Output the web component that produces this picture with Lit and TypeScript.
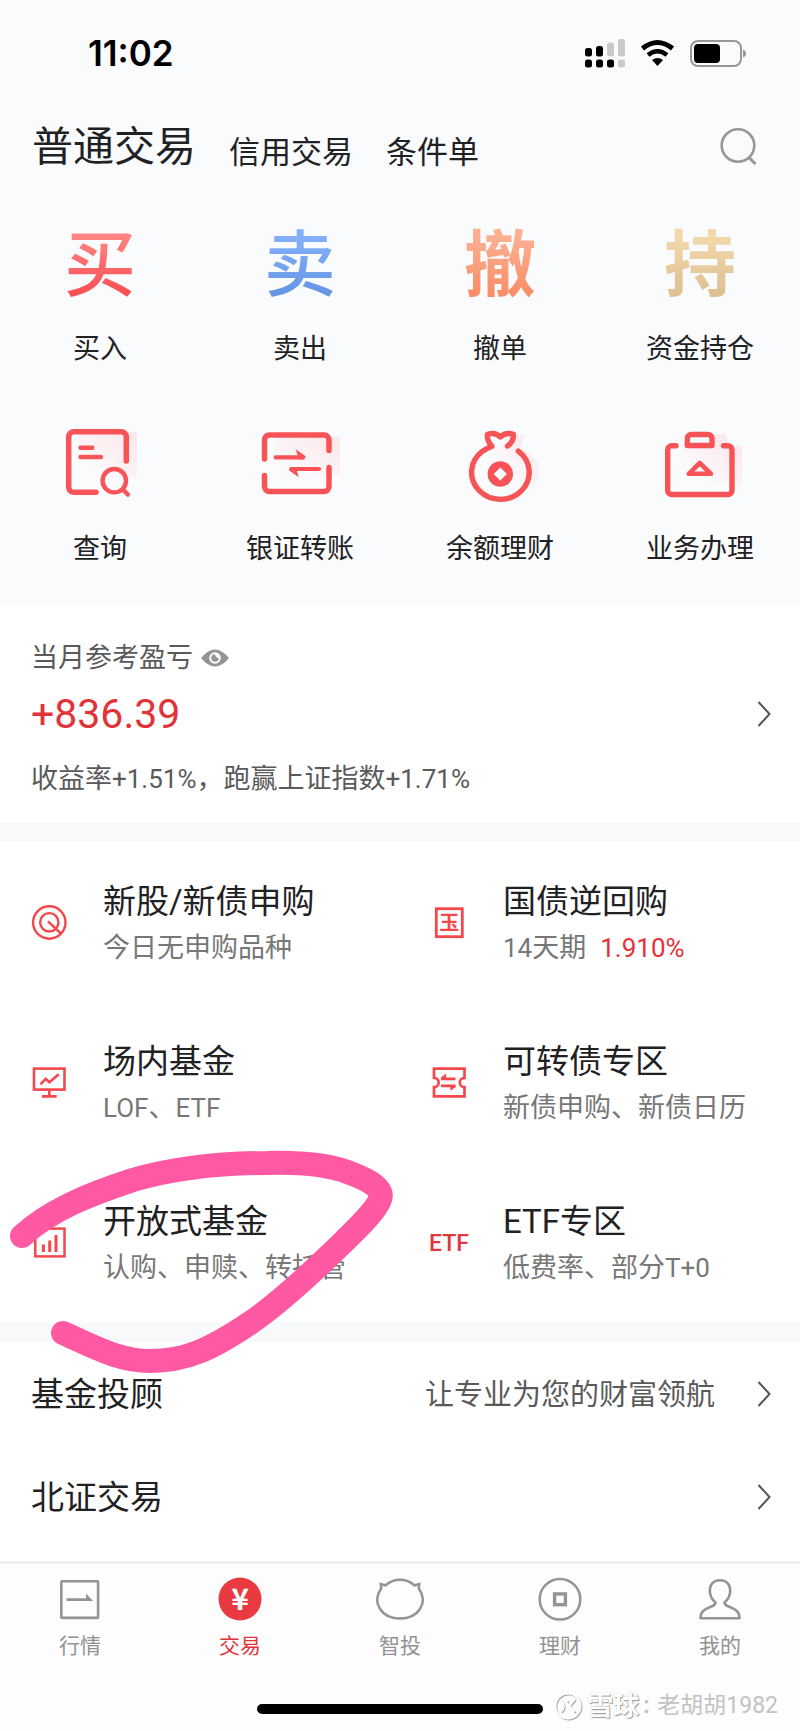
import { LitElement, html, css, svg, nothing } from "lit";
import type { TemplateResult } from "lit";
import { customElement, property, state } from "lit/decorators.js";
import { classMap } from "lit/directives/class-map.js";

type Art = ReturnType<typeof svg>;

const ART: Record<string, { box: string; body: Art }> = {
  query: {
    box: "0 0 80 80",
    body: svg`
      <defs><linearGradient id="q" x1="0" y1="1" x2="1" y2="0"><stop offset="0.2" stop-color="#fde3e6" stop-opacity="0"/><stop offset="1" stop-color="#fde6e9"/></linearGradient></defs>
      <rect x="18" y="7" width="59" height="46" rx="2" fill="url(#q)"/>
      <g fill="none" stroke="#f85457" stroke-linecap="round" stroke-width="5.5">
        <path d="M66.3 36V11.7a5 5 0 0 0-5-5H13.7a5 5 0 0 0-5 5v50.6a5 5 0 0 0 5 5H36"/>
        <path d="M20.5 22.7H32.3M20.5 32H41" stroke-width="4.4"/>
        <circle cx="54.3" cy="55.7" r="11.7" stroke-width="4.4"/>
        <path d="M63.6 65.2l4.2 4.4" stroke-width="4.4"/>
      </g>`,
  },
  transfer: {
    box: "0 0 80 80",
    body: svg`
      <defs><linearGradient id="t" x1="0" y1="1" x2="1" y2="0"><stop offset="0.2" stop-color="#fde3e6" stop-opacity="0"/><stop offset="1" stop-color="#fde6e9"/></linearGradient></defs>
      <rect x="15" y="12" width="65" height="38" rx="2" fill="url(#t)"/>
      <g fill="none" stroke="#f85457" stroke-linecap="round" stroke-width="5.5">
        <path d="M4.5 34V15a5 5 0 0 1 5-5H64a5 5 0 0 1 5 5v10.5"/>
        <path d="M4.5 50.5v11a5 5 0 0 0 5 5H64a5 5 0 0 0 5-5V42.5"/>
        <path d="M15.7 32.4H43M59 44H31.5" stroke-width="4.2"/>
      </g>
      <path d="M35.7 24.2L45.4 31q.6 2-1.5 3.4H39z" fill="#f85457"/>
      <path d="M38.7 52.2L29.2 45.4q-.6-2 1.5-3.4H36z" fill="#f85457"/>`,
  },
  bag: {
    box: "0 0 80 80",
    body: svg`
      <defs><linearGradient id="b" x1="0" y1="1" x2="1" y2="0"><stop offset="0.4" stop-color="#fde3e6" stop-opacity="0"/><stop offset="1" stop-color="#fde3e6"/></linearGradient></defs>
      <path d="M50 10h14l-4 14c14 4 22 16 18 32-8 20-38 20-52 8l-4-30z" fill="url(#b)"/>
      <g fill="none" stroke="#f85457" stroke-linecap="round" stroke-linejoin="round" stroke-width="5.4">
        <path d="M58.3 26.2A28.8 27 0 1 1 22.5 26.2Q27.5 23 32 21.3C28.5 17.5 26.8 13 27.5 9.3C33 7.5 37.500 8.800 40.300 12C43.500 8.800 48 7.500 53.500 9.300C53.500 14 51.500 18.500 47.500 21"/>
      </g>
      <path d="M31 12q5 .5 7.500 5h4q3-4.500 8-5l-9.500 10h-2z" fill="#fff" opacity=".6"/>
      <path fill-rule="evenodd" fill="#f85457" d="M40.300 36.300a12.700 12.700 0 1 1 0 25.400a12.700 12.700 0 1 1 0-25.400zM40.300 42.400L33.700 49l6.600 6.600L46.900 49z"/>`,
  },
  briefcase: {
    box: "0 0 80 80",
    body: svg`
      <defs><linearGradient id="c" x1="0" y1="1" x2="1" y2="0"><stop offset="0.2" stop-color="#fde3e6" stop-opacity="0"/><stop offset="1" stop-color="#fde3e6"/></linearGradient></defs>
      <path d="M22 22h28V9h16l2 12h14v38H22z" fill="url(#c)"/>
      <g fill="none" stroke="#f85457" stroke-linecap="round" stroke-linejoin="round" stroke-width="5.4">
        <path d="M16 20.800H11.700a4 4 0 0 0-4 4V65.500a4 4 0 0 0 4 4H68a4 4 0 0 0 4-4V24.800a4 4 0 0 0-4-4H63.500"/>
        <path d="M27.300 20.500V13.500a4 4 0 0 1 4-4H48a4 4 0 0 1 4 4v7z"/>
        <path d="M39.700 38L28.800 48.800H51z" stroke-width="4.600"/>
      </g>`,
  },
  subscribe: {
    box: "0 0 36 36",
    body: svg`<g fill="none" stroke="#f5484c" stroke-width="2.400">
      <circle cx="18.300" cy="18.500" r="16.200"/><circle cx="18.300" cy="18.300" r="9.200"/>
      <path d="M17 17.400L30 29.600" stroke-width="2.600"/></g>`,
  },
  bond: {
    box: "0 0 36 36",
    body: svg`<rect x="5.300" y="4.700" width="26" height="28" fill="none" stroke="#f5484c" stroke-width="2.800"/>
      <text class="glyph" x="18.300" y="26" font-size="20" text-anchor="middle" fill="#f5484c">玉</text>`,
  },
  monitor: {
    box: "0 0 36 36",
    body: svg`<g fill="none" stroke="#f5484c" stroke-width="2.600">
      <rect x="3" y="4.600" width="30.500" height="21"/>
      <path d="M18.300 26v6M11 32.400H25.700M9.500 20.300L14.700 14.800L18.400 18.200L27.700 10.300"/></g>`,
  },
  ticket: {
    box: "0 0 36 36",
    body: svg`<g fill="none" stroke="#f5484c" stroke-width="2.700">
      <path d="M3 4.600H33.500V13.800A4.700 4.700 0 0 0 33.500 23.200V32.400H3V23.200A4.700 4.700 0 0 0 3 13.800z"/>
      <path d="M10 14.800H24.500M10 21.800H24.500" stroke-width="2.800"/></g>
      <path d="M15.200 9.500L15.200 14H9.200zM19.400 26.800V22.500H25.600z" fill="#f5484c"/>`,
  },
  bars: {
    box: "0 0 36 36",
    body: svg`<g fill="none" stroke="#f5484c" stroke-width="2.500">
      <rect x="4.300" y="4.600" width="29.200" height="27.800"/>
      <path d="M12.400 20.500V28M18.700 16.500V28M25 11V28" stroke-width="3"/></g>`,
  },
  etf: {
    box: "0 0 36 36",
    body: svg`<text class="latin" x="18" y="27" font-size="23" text-anchor="middle" fill="#e0373c">ETF</text>`,
  },
  market: {
    box: "0 0 48 44",
    body: svg`<rect x="5.300" y="4.300" width="36.800" height="36.600" rx="1" fill="none" stroke="#949494" stroke-width="2.600"/>
      <path d="M10.500 21.300H30V16.600L37 24H10.500z" fill="#949494"/>`,
  },
  trade: {
    box: "0 0 48 44",
    body: svg`<circle cx="24" cy="22" r="21.500" fill="#e83a40"/>
      <text class="glyph" x="24" y="33" font-size="30" text-anchor="middle" fill="#fff">¥</text>`,
  },
  smart: {
    box: "0 0 48 44",
    body: svg`<path d="M5.200 11.500L4.800 7.200L9.600 8.300C18 1 30 1 38.400 8.300L43.200 7.200L42.800 11.500C53 26 42 41.600 24 41.600S-5 26 5.200 11.500z" fill="none" stroke="#949494" stroke-width="2.500"/>`,
  },
  wealth: {
    box: "0 0 48 44",
    body: svg`<g fill="none" stroke="#949494"><circle cx="24" cy="22.300" r="20.300" stroke-width="2.500"/>
      <rect x="18.600" y="16.900" width="10.800" height="10.800" stroke-width="3.400"/></g>`,
  },
  mine: {
    box: "0 0 48 44",
    body: svg`<path d="M19.500 25.500C15.500 22 13.800 18.500 13.800 14C13.800 7 18 3.200 24 3.200S34.200 7 34.200 14C34.200 18.500 32.500 22 28.500 25.500C28.500 28 31 29 35 30.500C41 33 43.500 35.500 43.500 41.300H4.500C4.500 35.500 7 33 13 30.500C17 29 19.500 28 19.500 25.500Z" fill="none" stroke="#949494" stroke-width="2.600" stroke-linejoin="round"/>`,
  },
  chevron: {
    box: "0 0 14 28",
    body: svg`<path d="M1.500 2L12.500 14L1.500 26" fill="none" stroke="#555" stroke-width="2"/>`,
  },
  search: {
    box: "0 0 40 40",
    body: svg`<g fill="none" stroke="#959799" stroke-width="2.600"><circle cx="19" cy="18.500" r="16.300"/><path d="M30.500 31L36.500 37" stroke-width="3"/></g>`,
  },
  eye: {
    box: "0 0 28 18",
    body: svg`<path d="M0 9Q7 .5 14 .5T28 9Q21 17.500 14 17.500T0 9z" fill="#949494"/>
      <circle cx="14" cy="9" r="5.800" fill="#fff"/><path d="M14 5.300A3.700 3.700 0 1 0 17.700 9Q14.500 9 14 5.300z" fill="#949494"/>`,
  },
};

@customElement("line-icon")
export class LineIcon extends LitElement {
  @property() name = "";

  static styles = css`
    :host { display: block; flex: none; }
    .art { display: block; width: 100%; height: 100%; overflow: visible; }
    .glyph { font-family: "Noto Sans CJK SC", sans-serif; font-weight: 700; }
    .latin { font-family: Roboto, sans-serif; font-weight: 500; }
  `;

  render() {
    const art = ART[this.name];
    return art
      ? html`<svg class="art" viewBox=${art.box} aria-hidden="true">${art.body}</svg>`
      : nothing;
  }
}

interface Shortcut { label: string; icon?: string; mark?: string; tone?: string; }
interface Service { icon: string; title: TemplateResult | string; note: TemplateResult | string; circled?: boolean; }

const SHORTCUTS: Shortcut[] = [
  { mark: "买", tone: "buy", label: "买入" },
  { mark: "卖", tone: "sell", label: "卖出" },
  { mark: "撤", tone: "cancel", label: "撤单" },
  { mark: "持", tone: "hold", label: "资金持仓" },
  { icon: "query", label: "查询" },
  { icon: "transfer", label: "银证转账" },
  { icon: "bag", label: "余额理财" },
  { icon: "briefcase", label: "业务办理" },
];

const SERVICES: Service[] = [
  { icon: "subscribe", title: "新股/新债申购", note: "今日无申购品种" },
  { icon: "bond", title: "国债逆回购", note: html`<span class="num">14</span>天期<span class="num rate">1.910%</span>` },
  { icon: "monitor", title: "场内基金", note: html`<span class="num">LOF</span>、<span class="num">ETF</span>` },
  { icon: "ticket", title: "可转债专区", note: "新债申购、新债日历" },
  { icon: "bars", title: "开放式基金", note: "认购、申赎、转托管", circled: true },
  { icon: "etf", title: "ETF专区", note: html`低费率、部分<span class="num">T+0</span>` },
];

const LINKS = [
  { title: "基金投顾", note: "让专业为您的财富领航" },
  { title: "北证交易", note: "" },
];

const NAV = [
  { icon: "market", label: "行情" },
  { icon: "trade", label: "交易" },
  { icon: "smart", label: "智投" },
  { icon: "wealth", label: "理财" },
  { icon: "mine", label: "我的" },
];

@customElement("app-root")
export class AppRoot extends LitElement {
  @state() private tab = 0;
  @state() private page = 1;

  static styles = css`
    :host {
      display: block;
      background: #fff;
      color: #1f2123;
      font-family: Roboto, "Noto Sans CJK SC", sans-serif;
      font-size: 27px;
      line-height: 38px;
    }
    * { box-sizing: border-box; }
    button { font: inherit; color: inherit; background: none; border: 0; padding: 0; margin: 0; cursor: pointer; }
    a { color: inherit; text-decoration: none; }
    .num { font-size: 26px; }

    .top { background: #fafbfd; }
    .status { display: flex; justify-content: space-between; align-items: center; height: 106px; padding: 0 53px 0 88px; }
    .time { font: 600 35px/40px Inter, sans-serif; color: #000; }
    .signals { display: block; width: 162px; height: 34px; }
    .head { display: flex; align-items: flex-end; padding: 17px 41px 34px 32px; }
    .tabs { display: flex; align-items: flex-end; gap: 33px; flex: 1; }
    .tab { font-size: 31px; line-height: 36px; white-space: nowrap; }
    .tab.on { font-size: 41px; line-height: 48px; }
    .search { align-self: center; }
    .search line-icon { width: 40px; height: 40px; }

    .shortcuts { display: grid; grid-template-columns: repeat(4, 1fr); }
    .shortcut { display: flex; flex-direction: column; align-items: center; gap: 25px; padding: 20px 0 37px; }
    .shortcut line-icon { width: 80px; height: 80px; }
    .mark {
      height: 80px; font-size: 72px; line-height: 82px; font-weight: 500;
      color: transparent; background-clip: text; -webkit-background-clip: text;
    }
    .buy { background-image: linear-gradient(#ff8482 15%, #fb5054 85%); }
    .sell { background-image: linear-gradient(#84b0fb 15%, #6696e4 85%); }
    .cancel { background-image: linear-gradient(#fbb092 15%, #fa8e68 85%); font-weight: 700; }
    .hold { background-image: linear-gradient(#f2d8ab 15%, #dfc092 85%); font-weight: 700; }

    .profit { display: flex; align-items: center; width: 100%; padding: 0 29px 0 31px; text-align: left; }
    .profit-text { display: flex; flex-direction: column; flex: 1; padding: 34px 0 24px; color: #5a5a5a; }
    .caption { display: flex; align-items: center; gap: 8px; }
    .caption line-icon { width: 28px; height: 18px; }
    .amount { margin: 13px 0 22px; font-size: 41px; line-height: 48px; color: #e33238; }
    .go { width: 14px; height: 28px; }

    .band { height: 20px; background: #f8f9fb; }

    .services { display: grid; grid-template-columns: 1fr 1fr; }
    .service { position: relative; display: flex; align-items: center; gap: 36px; height: 160px; padding: 0 0 0 31px; text-align: left; }
    .service line-icon { width: 36px; height: 36px; }
    .service-text { display: flex; flex-direction: column; gap: 6px; padding-top: 4px; white-space: nowrap; }
    .service-title { font-size: 33px; line-height: 42px; }
    .service-note { color: #777; }
    .rate { color: #e33238; margin-left: 14px; }
    .ink { position: absolute; left: 0; top: -20px; width: 400px; height: 240px; z-index: 1; pointer-events: none; }

    .links { padding-bottom: 13px; }
    .link { display: flex; align-items: center; height: 103px; padding: 0 29px 0 31px; }
    .link-title { flex: 1; padding-top: 2px; font-size: 33px; }
    .link-note { padding-top: 2px; font-size: 29px; color: #5a5a5a; margin-right: 42px; }

    .foot { position: relative; border-top: 3px solid #f0f0f1; background: #fdfdfd; padding-bottom: 17px; }
    .nav { display: grid; grid-template-columns: repeat(5, 1fr); padding-bottom: 43px; }
    .nav-item { display: flex; flex-direction: column; align-items: center; gap: 10px; padding-top: 13px; font-size: 21px; line-height: 30px; color: #929292; }
    .nav-item.on { color: #e33238; }
    .nav-item line-icon { width: 48px; height: 44px; }
    .home { width: 286px; height: 10px; margin: 0 auto; border-radius: 5px; background: #000; }
    .credit {
      position: absolute; right: 22px; bottom: 9px; display: flex; align-items: center;
      font-size: 23px; line-height: 32px; color: #c3c3c3;
    }
    .brand { font-size: 26px; font-weight: 700; color: #fff; text-shadow: 1px 1px 1px #999, 0 0 1px #bbb; margin-left: 4px; }
    .colon { width: 18px; padding-left: 4px; font-weight: 700; }
    .credit-logo { display: block; width: 30px; height: 30px; }
  `;

  private shortcut(s: Shortcut) {
    return html`<button class="shortcut">
      ${s.mark
        ? html`<span class=${classMap({ mark: true, [s.tone!]: true })} aria-hidden="true">${s.mark}</span>`
        : html`<line-icon name=${s.icon!}></line-icon>`}
      <span>${s.label}</span>
    </button>`;
  }

  private service(s: Service) {
    return html`<button class="service">
      <line-icon name=${s.icon}></line-icon>
      <span class="service-text">
        <span class="service-title">${s.title}</span>
        <span class="service-note">${s.note}</span>
      </span>
      ${s.circled
        ? html`<svg class="ink" viewBox="0 1142 400 240" aria-hidden="true">
            <path fill="none" stroke="#ff59a3" stroke-width="24" stroke-linecap="round" stroke-linejoin="round"
              d="M22 1236C50 1210 90 1194 133 1180C175 1168 225 1163 267 1163C305 1162 330 1165 350 1173C372 1181 384 1190 380 1199C377 1210 355 1231 333 1252C305 1279 278 1304 250 1323C210 1350 185 1361 150 1361C118 1361 90 1345 63 1333"/>
          </svg>`
        : nothing}
    </button>`;
  }

  render() {
    return html`
      <header class="top">
        <div class="status">
          <span class="time">11:02</span>
          <svg class="signals" viewBox="585 36 162 34" aria-hidden="true">
            <g fill="#000">
              <rect x="585" y="48" width="7" height="8.500" rx="2.500"/><rect x="596" y="46" width="7" height="10.500" rx="2.500"/>
              <rect x="585" y="59.500" width="7" height="8" rx="2.500"/><rect x="596" y="59.500" width="7" height="8" rx="2.500"/><rect x="607" y="59.500" width="7" height="8" rx="2.500"/>
            </g>
            <g fill="#c9cacc">
              <rect x="607" y="42.500" width="7" height="14" rx="2.500"/><rect x="618" y="39" width="7" height="17.500" rx="2.500"/><rect x="618" y="59.500" width="7" height="8" rx="2.500"/>
            </g>
            <g fill="none" stroke="#000" stroke-width="5"><path d="M642.500 48.500Q657.500 36.500 672.500 48.500"/><path d="M648 55Q657.500 47.500 667 55" stroke-width="4.600"/></g>
            <path d="M652 60Q657.500 56 663 60L657.500 66z" fill="#000"/>
            <rect x="691" y="41" width="50" height="25" rx="7" fill="none" stroke="#97989a" stroke-width="2"/>
            <rect x="694" y="44" width="26" height="19" rx="4"/>
            <path d="M743 49.500q3 1 3 4t-3 4z" fill="#97989a"/>
          </svg>
        </div>
        <div class="head">
          <nav class="tabs">
            ${["普通交易", "信用交易", "条件单"].map((t, i) => html`
              <button class=${classMap({ tab: true, on: i === this.tab })} @click=${() => (this.tab = i)}>${t}</button>`)}
          </nav>
          <button class="search" aria-label="搜索"><line-icon name="search"></line-icon></button>
        </div>
        <div class="shortcuts">${SHORTCUTS.map((s) => this.shortcut(s))}</div>
      </header>
      <main>
        <button class="profit">
          <span class="profit-text">
            <span class="caption">当月参考盈亏<line-icon name="eye"></line-icon></span>
            <span class="amount">+836.39</span>
            <span>收益率<span class="num">+1.51%</span>，跑赢上证指数<span class="num">+1.71%</span></span>
          </span>
          <line-icon class="go" name="chevron"></line-icon>
        </button>
        <div class="band"></div>
        <section class="services">${SERVICES.map((s) => this.service(s))}</section>
        <div class="band"></div>
        <section class="links">
          ${LINKS.map((l) => html`<a class="link" href="#">
            <span class="link-title">${l.title}</span>
            <span class="link-note">${l.note}</span>
            <line-icon class="go" name="chevron"></line-icon>
          </a>`)}
        </section>
      </main>
      <footer class="foot">
        <nav class="nav">
          ${NAV.map((n, i) => html`<button class=${classMap({ "nav-item": true, on: i === this.page })} @click=${() => (this.page = i)}>
            <line-icon name=${n.icon}></line-icon><span>${n.label}</span>
          </button>`)}
        </nav>
        <div class="home"></div>
        <div class="credit">
          <svg class="credit-logo" viewBox="0 0 30 30" aria-hidden="true">
            <g fill="none" stroke="#a9a9a9" stroke-width="2" transform="translate(1 1)"><circle cx="15" cy="15" r="12.500"/><path d="M7 9Q14 15 8 21M22 8L16 15L22 21M11 7L15 11"/></g>
            <g fill="none" stroke="#fff" stroke-width="2"><circle cx="15" cy="15" r="12.500"/><path d="M7 9Q14 15 8 21M22 8L16 15L22 21M11 7L15 11"/></g>
          </svg>
          <span class="brand">雪球</span><span class="colon">:</span><span>老胡胡1982</span>
        </div>
      </footer>
    `;
  }
}
